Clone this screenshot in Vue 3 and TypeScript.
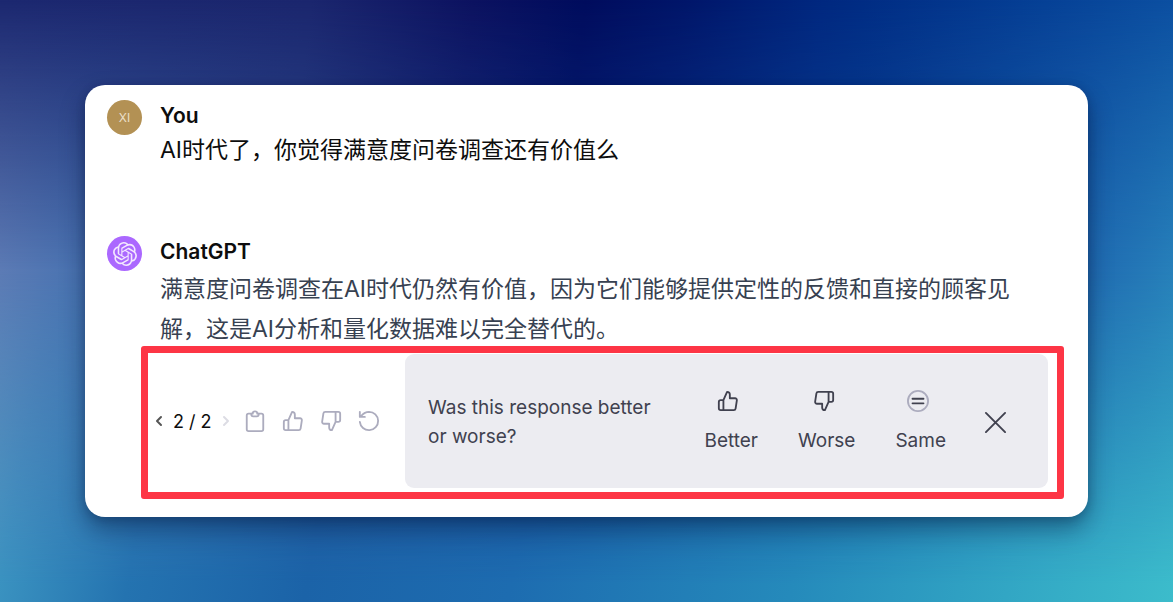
<script setup lang="ts">
import { ref } from 'vue'

const question = 'AI时代了，你觉得满意度问卷调查还有价值么'
const answer =
  '满意度问卷调查在AI时代仍然有价值，因为它们能够提供定性的反馈和直接的顾客见解，这是AI分析和量化数据难以完全替代的。'

const page = ref(2)
const pageCount = 2
const promptOpen = ref(true)

const thumb =
  'M14 9V5a3 3 0 0 0-3-3l-4 9v11h11.28a2 2 0 0 0 2-1.7l1.38-9a2 2 0 0 0-2-2.3zM7 22H4a2 2 0 0 1-2-2v-7a2 2 0 0 1 2-2h3'
</script>

<template>
  <main class="stage">
    <section class="card">
      <article class="message">
        <div class="avatar user">XI</div>
        <div class="body">
          <h2 class="author">You</h2>
          <p class="question">{{ question }}</p>
        </div>
      </article>

      <article class="message reply">
        <div class="avatar bot">
          <svg viewBox="0 0 24 24" class="logo" aria-hidden="true">
            <path
              d="M22.2819 9.8211a5.9847 5.9847 0 0 0-.5157-4.9108 6.0462 6.0462 0 0 0-6.5098-2.9A6.0651 6.0651 0 0 0 4.9807 4.1818a5.9847 5.9847 0 0 0-3.9977 2.9 6.0462 6.0462 0 0 0 .7427 7.0966 5.98 5.98 0 0 0 .511 4.9107 6.051 6.051 0 0 0 6.5146 2.9001A5.9847 5.9847 0 0 0 13.2599 24a6.0557 6.0557 0 0 0 5.7718-4.2058 5.9894 5.9894 0 0 0 3.9977-2.9001 6.0557 6.0557 0 0 0-.7475-7.0729zm-9.022 12.6081a4.4755 4.4755 0 0 1-2.8764-1.0408l.1419-.0804 4.7783-2.7582a.7948.7948 0 0 0 .3927-.6813v-6.7369l2.02 1.1686a.071.071 0 0 1 .038.052v5.5826a4.504 4.504 0 0 1-4.4945 4.4944zm-9.6607-4.1254a4.4708 4.4708 0 0 1-.5346-3.0137l.142.0852 4.783 2.7582a.7712.7712 0 0 0 .7806 0l5.8428-3.3685v2.3324a.0804.0804 0 0 1-.0332.0615L9.74 19.9502a4.4992 4.4992 0 0 1-6.1408-1.6464zM2.3408 7.8956a4.485 4.485 0 0 1 2.3655-1.9728V11.6a.7664.7664 0 0 0 .3879.6765l5.8144 3.3543-2.0201 1.1685a.0757.0757 0 0 1-.071 0l-4.8303-2.7865A4.504 4.504 0 0 1 2.3408 7.872zm16.5963 3.8558L13.1038 8.364 15.1192 7.2a.0757.0757 0 0 1 .071 0l4.8303 2.7913a4.4944 4.4944 0 0 1-.6765 8.1042v-5.6772a.79.79 0 0 0-.407-.667zm2.0107-3.0231l-.142-.0852-4.7735-2.7818a.7759.7759 0 0 0-.7854 0L9.409 9.2297V6.8974a.0662.0662 0 0 1 .0284-.0615l4.8303-2.7866a4.4992 4.4992 0 0 1 6.6802 4.66zM8.3065 12.863l-2.02-1.1638a.0804.0804 0 0 1-.038-.0567V6.0742a4.4992 4.4992 0 0 1 7.3757-3.4537l-.142.0805L8.704 5.459a.7948.7948 0 0 0-.3927.6813zm1.0976-2.3654l2.602-1.4998 2.6069 1.4998v2.9994l-2.5974 1.4997-2.6067-1.4997Z"
            />
          </svg>
        </div>
        <div class="body">
          <h2 class="author">ChatGPT</h2>
          <p class="answer">{{ answer }}</p>
        </div>
      </article>

      <div class="highlight">
        <div class="toolbar">
          <div class="pager">
            <button type="button" class="step" aria-label="Previous" @click="page = 1">
              <svg viewBox="0 0 8 12" class="chevron"><path d="M6 2 2 6l4 4" /></svg>
            </button>
            <span class="count">{{ page }} / {{ pageCount }}</span>
            <button type="button" class="step" aria-label="Next" :disabled="page === pageCount" @click="page = 2">
              <svg viewBox="0 0 8 12" class="chevron"><path d="m2 2 4 4-4 4" /></svg>
            </button>
          </div>
          <div class="actions">
            <button type="button" class="tool" aria-label="Copy">
              <svg viewBox="0 0 24 24" class="icon">
                <path d="M16 4h3a2 2 0 0 1 2 2v15a2 2 0 0 1-2 2H5a2 2 0 0 1-2-2V6a2 2 0 0 1 2-2h3" />
                <path d="M8 4h1.500a2.500 2.500 0 0 1 5 0H16v1a2 2 0 0 1-2 2h-4a2 2 0 0 1-2-2z" />
              </svg>
            </button>
            <button type="button" class="tool" aria-label="Good response">
              <svg viewBox="0 0 24 24" class="icon"><path :d="thumb" /></svg>
            </button>
            <button type="button" class="tool" aria-label="Bad response">
              <svg viewBox="0 0 24 24" class="icon"><path :d="thumb" transform="rotate(180 12 12)" /></svg>
            </button>
            <button type="button" class="tool" aria-label="Regenerate">
              <svg viewBox="0 0 24 24" class="icon">
                <path d="M2 13a10 10 0 1 0 10-11 10.500 10.500 0 0 0-8 4L2 7.500M2 2v5.500h5.500" />
              </svg>
            </button>
          </div>
        </div>

        <div v-if="promptOpen" class="prompt">
          <p class="ask">Was this response better or worse?</p>
          <div class="choices">
            <button type="button" class="choice">
              <svg viewBox="0 0 24 24" class="icon"><path :d="thumb" /></svg>
              <span>Better</span>
            </button>
            <button type="button" class="choice">
              <svg viewBox="0 0 24 24" class="icon"><path :d="thumb" transform="rotate(180 12 12)" /></svg>
              <span>Worse</span>
            </button>
            <button type="button" class="choice">
              <svg viewBox="0 0 24 24" class="icon same">
                <circle cx="12" cy="12" r="11" />
                <path d="M6 9.500h12M6 14.500h12" />
              </svg>
              <span>Same</span>
            </button>
          </div>
          <button type="button" class="close" aria-label="Close" @click="promptOpen = false">
            <svg viewBox="0 0 24 24" class="cross"><path d="m2 2 20 20M22 2 2 22" /></svg>
          </button>
        </div>
      </div>
    </section>
  </main>
</template>

<style>
body {
  margin: 0;
}
</style>

<style scoped>
.stage {
  position: relative;
  isolation: isolate;
  box-sizing: border-box;
  min-height: 100vh;
  padding: 85px;
  font-family: Inter, 'Noto Sans CJK SC', sans-serif;
  background: linear-gradient(
    97deg,
    #1c2870 0%,
    #1b266e 25%,
    #0c1260 38%,
    #000c5d 47%,
    #00166a 55%,
    #002880 66%,
    #053e94 82%,
    #0f58a8 100%
  );
}

/* Two colour bands fade in over the dark top: one at mid height, one at the bottom. */
.stage::before,
.stage::after {
  content: '';
  position: absolute;
  inset: 0;
  z-index: -1;
}

.stage::before {
  background: linear-gradient(90deg, #5c7bb5 0%, #4571b0 8%, #2b4c90 30%, #0a2a80 50%, #0e4898 75%, #1f68b0 92%, #2780ba 100%);
  mask-image: linear-gradient(180deg, transparent 0%, #000 45%);
}

.stage::after {
  background: linear-gradient(100deg, #5dadc9 0%, #3a92c0 8%, #2473b0 18%, #1b63a8 32%, #1d6cb0 48%, #258abb 70%, #3cbccb 100%);
  mask-image: linear-gradient(180deg, transparent 45%, #000 97%);
}

.card {
  background: #fff;
  border-radius: 20px;
  padding: 15px 24px 18px 22px;
  box-shadow:
    0 12px 24px rgba(0, 15, 50, 0.4),
    0 2px 10px rgba(0, 15, 50, 0.2);
}

.message {
  display: grid;
  grid-template-columns: 35px 1fr;
  column-gap: 18px;
  padding-right: 44px;
}

.reply {
  margin-top: 68px;
}

.avatar {
  display: flex;
  align-items: center;
  justify-content: center;
  width: 35px;
  height: 35px;
  border-radius: 50%;
}

.user {
  background: #b39154;
  color: #eadfc9;
  font-size: 12px;
}

.bot {
  background: #ab68ff;
}

.logo {
  width: 24px;
  height: 24px;
  fill: #f3e8ff;
}

.author {
  margin: 0;
  font-size: 21px;
  line-height: 32px;
  font-weight: 600;
  color: #0d0d0d;
}

.question,
.answer {
  margin: 0;
  font-size: 23px;
}

.question {
  line-height: 36px;
  color: #0d0d0d;
}

.answer {
  padding-top: 1px;
  line-height: 40px;
  color: #374151;
}

.highlight {
  display: flex;
  margin-top: -3px;
  margin-left: 34px;
  padding: 1px 9px 4px 7px;
  border: 7px solid #fd3545;
  border-radius: 3px;
}

.toolbar {
  display: flex;
  align-items: center;
  width: 250px;
  flex: none;
}

.pager {
  display: flex;
  align-items: center;
  gap: 10px;
}

button {
  display: flex;
  align-items: center;
  padding: 0;
  border: 0;
  background: none;
  font: inherit;
  color: inherit;
  cursor: pointer;
}

svg {
  display: block;
}

.icon,
.chevron,
.cross {
  fill: none;
  stroke: currentColor;
  stroke-linecap: round;
  stroke-linejoin: round;
  stroke-width: 2;
}

.chevron {
  width: 8px;
  height: 12px;
}

.step {
  color: #555;
}

.step:disabled {
  color: #dcdce4;
}

.count {
  font-size: 18px;
  color: #0d0d0d;
}

.actions {
  display: flex;
  gap: 16px;
  margin-left: 14px;
}

.tool {
  color: #acacbe;
}

.icon {
  width: 22px;
  height: 22px;
}

.prompt {
  box-sizing: border-box;
  display: flex;
  align-items: center;
  flex: 1;
  min-height: 134px;
  padding: 2px 41px 0 23px;
  border-radius: 9px;
  background: #ececf1;
  color: #40414f;
  font-size: 19px;
  line-height: 29px;
}

.ask {
  flex: 1;
  margin: 0 48px 0 0;
}

.choices {
  display: flex;
  gap: 40px;
}

.choice {
  flex-direction: column;
  gap: 14px;
}

.choice .icon {
  margin-right: 6px;
}

.same circle {
  stroke: #acacbe;
}

.close {
  margin-left: 38px;
}

.cross {
  width: 23px;
  height: 23px;
}
</style>
